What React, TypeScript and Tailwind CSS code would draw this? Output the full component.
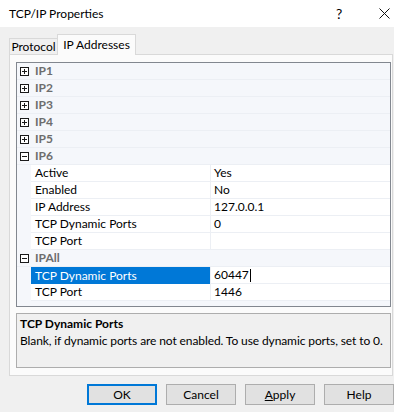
import { Fragment } from "react";

type Prop = { name: string; value: string; selected?: boolean };
type Cat = { title: string; open: boolean; props?: Prop[] };

const cats: Cat[] = [
  { title: "IP1", open: false },
  { title: "IP2", open: false },
  { title: "IP3", open: false },
  { title: "IP4", open: false },
  { title: "IP5", open: false },
  {
    title: "IP6",
    open: true,
    props: [
      { name: "Active", value: "Yes" },
      { name: "Enabled", value: "No" },
      { name: "IP Address", value: "127.0.0.1" },
      { name: "TCP Dynamic Ports", value: "0" },
      { name: "TCP Port", value: "" },
    ],
  },
  {
    title: "IPAll",
    open: true,
    props: [
      { name: "TCP Dynamic Ports", value: "60447", selected: true },
      { name: "TCP Port", value: "1446" },
    ],
  },
];

function ToggleBox({ open }: { open: boolean }) {
  return (
    <svg width="9" height="9" viewBox="0 0 9 9" className="block">
      <rect x="0.5" y="0.5" width="8" height="8" fill="#fff" stroke="#1a1a1a" />
      <line x1="2" y1="4.5" x2="7" y2="4.5" stroke="#1a1a1a" />
      {!open && <line x1="4.5" y1="2" x2="4.5" y2="7" stroke="#1a1a1a" />}
    </svg>
  );
}

export default function App() {
  return (
    <div className="w-[394px] h-[412px] bg-[#f0f0f0] overflow-hidden text-[12px] text-black font-['Lato',sans-serif] leading-none">
      {/* Title bar */}
      <div className="h-[27px] bg-white flex items-center pl-[9px]">
        <span className="text-[12px] flex-1">TCP/IP Properties</span>
        <span className="text-[14px] w-[12px] mr-[31px]">?</span>
        <svg width="11" height="11" viewBox="0 0 11 11" className="mr-[4px]">
          <path d="M0.5 0.5 L10.5 10.5 M10.5 0.5 L0.5 10.5" stroke="#111" strokeWidth="1" />
        </svg>
      </div>

      {/* Tabs */}
      <div className="flex items-end pl-[9px] mt-[6px] h-[21px]">
        <div className="h-[16px] w-[49px] justify-center border border-b-0 border-[#d9d9d9] bg-[#f0f0f0] flex items-center">Protocol</div>
        <div className="h-[21px] w-[79px] justify-center border border-b-0 border-[#d9d9d9] bg-[#fbfbfb] flex items-center -ml-px relative z-10 top-px">IP Addresses</div>
      </div>

      {/* Tab panel */}
      <div className="ml-[9px] w-[384px] h-[322px] border border-[#d9d9d9] bg-[#fbfbfb] pt-[7px] pl-[6px]">
        {/* Property grid */}
        <div className="w-[375px] h-[245px] border border-[#82878f] bg-[#f5f7fb]">
          {cats.map((c) => (
            <Fragment key={c.title}>
              <div className="h-[17px] flex items-center border-b border-[#eceff4]">
                <div className="w-[14px] flex justify-center pl-[1px]">
                  <ToggleBox open={c.open} />
                </div>
                <span className="pl-[4px] font-bold text-[#6d6d6d]">{c.title}</span>
              </div>
              {c.props?.map((p) => (
                <div key={c.title + p.name} className="h-[17px] flex">
                  <div className="w-[14px]" />
                  <div
                    className={
                      p.selected
                        ? "w-[179px] flex items-center pl-[4px] bg-[#0078d7] text-white"
                        : "w-[179px] flex items-center pl-[4px] bg-white border-b border-[#eceff4]"
                    }
                  >
                    {p.name}
                  </div>
                  <div className="flex-1 flex items-center pl-[3px] bg-white border-l border-b border-[#eceff4]">
                    {p.value}
                    {p.selected && <span className="inline-block w-px h-[13px] bg-black ml-px" />}
                  </div>
                </div>
              ))}
            </Fragment>
          ))}
        </div>

        {/* Description */}
        <div className="mt-[6px] w-[375px] h-[55px] border border-[#adadad] bg-[#f0f0f0] px-[3px] pt-[4px]">
          <div className="font-bold">TCP Dynamic Ports</div>
          <div className="mt-[5px] whitespace-nowrap tracking-[-0.1px]">Blank, if dynamic ports are not enabled. To use dynamic ports, set to 0.</div>
        </div>
      </div>

      {/* Buttons */}
      <div className="flex gap-[9px] pl-[87px] mt-[8px]">
        <button className="w-[73px] h-[21px] border-2 border-[#0078d7] bg-[#e1e1e1]">OK</button>
        <button className="w-[73px] h-[21px] border border-[#adadad] bg-[#e1e1e1]">Cancel</button>
        <button className="w-[73px] h-[21px] border border-[#adadad] bg-[#e1e1e1]">
          <span className="underline">A</span>pply
        </button>
        <button className="w-[73px] h-[21px] border border-[#adadad] bg-[#e1e1e1]">Help</button>
      </div>
    </div>
  );
}
